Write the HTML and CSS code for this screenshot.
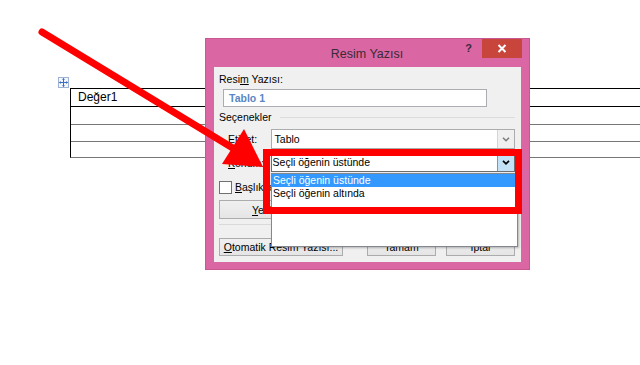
FILE: index.html
```html
<!DOCTYPE html>
<html lang="tr">

<head>
    <meta charset="UTF-8">
    <meta name="viewport" content="width=device-width, initial-scale=1.0">
    <title>Resim Yazısı</title>
    <link rel="stylesheet" href="styles.css">
</head>

<body>
    <div class="doc">
        <div class="table-wrap">
            <span class="move-handle">
                <svg width="9" height="9" viewBox="0 0 9 9">
                    <path d="M4.5 0.5 L4.5 8.5 M0.5 4.5 L8.5 4.5" stroke="#3b6fc4" stroke-width="1" fill="none" />
                    <path d="M4.5 0 L3 1.8 L6 1.8 Z M4.5 9 L3 7.2 L6 7.2 Z M0 4.5 L1.8 3 L1.8 6 Z M9 4.5 L7.2 3 L7.2 6 Z" fill="#3b6fc4" />
                </svg>
            </span>
            <div class="doc-table">
                <div class="doc-row">Değer1</div>
                <div class="doc-row"></div>
                <div class="doc-row light"></div>
                <div class="doc-row light short"></div>
            </div>
        </div>
    </div>

    <div class="dialog">
        <div class="titlebar">
            <span class="title">Resim Yazısı</span>
            <div class="title-buttons">
                <span class="help">?</span>
                <span class="close">
                    <svg width="10" height="9" viewBox="0 0 10 9">
                        <path d="M1.5 1 L8.5 8 M8.5 1 L1.5 8" stroke="#fff" stroke-width="2" />
                    </svg>
                </span>
            </div>
        </div>

        <div class="client">
            <div class="field-label">Resi<u>m</u> Yazısı:</div>
            <div class="textbox">Tablo 1</div>

            <div class="group-title">
                <span>Seçenekler</span>
                <span class="rule"></span>
            </div>

            <div class="row">
                <span class="row-label">Etik<u>e</u>t:</span>
                <div class="combo">
                    <span class="combo-text">Tablo</span>
                    <span class="combo-arrow">
                        <svg width="8" height="5" viewBox="0 0 8 5">
                            <polyline points="1,0.8 4,3.8 7,0.8" fill="none" stroke="#7a7a7a" stroke-width="1.5" />
                        </svg>
                    </span>
                </div>
            </div>

            <div class="row konum">
                <span class="row-label"><u>K</u>onum:</span>
                <div class="combo open">
                    <span class="combo-text">Seçli öğenin üstünde</span>
                    <span class="combo-arrow">
                        <svg width="8" height="5" viewBox="0 0 8 5">
                            <polyline points="1,0.8 4,3.8 7,0.8" fill="none" stroke="#000" stroke-width="1.7" />
                        </svg>
                    </span>
                </div>
            </div>

            <!-- the open list covers everything right of x=270 here, so clip it -->
            <div class="check-row">
                <span class="checkbox"></span>
                <span class="clipped"><u>B</u>aşlıktan</span>
            </div>

            <div class="button-row clip-row">
                <button class="btn btn-wide"><u>Y</u>eni Etiket...</button>
            </div>

            <div class="separator"></div>

            <div class="button-row bottom">
                <button class="btn btn-wide"><u>O</u>tomatik Resim Yazısı...</button>
                <span class="spacer"></span>
                <button class="btn btn-ok">Tamam</button>
                <button class="btn btn-ok">İptal</button>
            </div>

            <div class="dropdown-list">
                <div class="option selected">Seçli öğenin üstünde</div>
                <div class="option">Seçli öğenin altında</div>
            </div>
        </div>
    </div>

    <svg class="annotation" width="640" height="365" viewBox="0 0 640 365">
        <rect x="266.5" y="152.5" width="252" height="58" fill="none" stroke="#fe0000" stroke-width="7" />
        <line x1="42" y1="32" x2="236" y2="150" stroke="#fe0000" stroke-width="7" stroke-linecap="round" />
        <polygon points="263,167 244,129 222,164" fill="#fe0000" />
    </svg>
</body>

</html>
```

FILE: styles.css
```css
body {
    margin: 0;
    width: 640px;
    height: 365px;
    overflow: hidden;
    position: relative;
    background: #fff;
    font-family: "Liberation Sans", Arial, sans-serif;
}

/* document behind the dialog */
.doc {
    padding: 88px 0 0 70px;
}

.table-wrap {
    position: relative;
}

.move-handle {
    position: absolute;
    left: -12px;
    top: -11px;
    width: 9px;
    height: 9px;
    border: 1px solid #9fb2d4;
    background: #f4f7fc;
    display: flex;
}

.doc-table {
    border-left: 1px solid #000;
    border-bottom: 1px solid #777;
    width: 600px;
}

.doc-row {
    border-top: 1px solid #000;
    height: 17px;
    line-height: 17px;
    padding-left: 7px;
    font-size: 12px;
    color: #000;
}

.doc-row.light {
    border-top-color: #777;
    height: 16px;
}

.doc-row.short {
    height: 15px;
}

/* dialog window */
.dialog {
    position: absolute;
    left: 205px;
    top: 38px;
    width: 325px;
    height: 232px;
    box-sizing: border-box;
    padding: 0 8px 7px 8px;
    background: #da67a3;
    border: 1px solid #c95892;
    display: flex;
    flex-direction: column;
}

.titlebar {
    height: 28px;
    display: grid;
    margin: 0 -1px 0 0;
}

.title,
.title-buttons {
    grid-area: 1 / 1;
}

.title {
    justify-self: center;
    align-self: center;
    font-size: 12.5px;
    color: #3a2a35;
    margin-top: 1px;
    margin-left: -2px;
}

.title-buttons {
    justify-self: end;
    display: flex;
    align-items: flex-start;
    gap: 10px;
}

.help {
    font-size: 11px;
    font-weight: bold;
    color: #3a2a3a;
    margin-top: 3px;
}

.close {
    width: 40px;
    height: 19px;
    background: #c8453c;
    display: flex;
    align-items: center;
    justify-content: center;
}

.client {
    position: relative;
    flex: 1;
    background: #f0f0f0;
    padding: 6px 6px 0 5px;
    font-size: 10.5px;
    color: #000;
    display: flex;
    flex-direction: column;
}

.field-label {
    line-height: 13px;
}

.textbox {
    margin: 3px 0 0 4px;
    width: 264px;
    height: 18px;
    box-sizing: border-box;
    border: 1px solid #abadb3;
    background: #fff;
    padding-left: 5px;
    line-height: 16px;
    font-weight: bold;
    color: #5a86c4;
}

.group-title {
    margin-top: 4px;
    display: flex;
    align-items: center;
    gap: 8px;
    line-height: 12px;
}

.rule {
    flex: 1;
    height: 1px;
    background: #dcdcdc;
    margin-top: 1px;
}

.row {
    margin-top: 6px;
    display: flex;
    align-items: center;
}

.row.konum {
    margin-top: 4px;
}

.row-label {
    width: 43px;
    padding-left: 9px;
}

.combo {
    width: 247px;
    height: 20px;
    box-sizing: border-box;
    border: 1px solid #acacac;
    background: #fff;
    display: flex;
    align-items: stretch;
}

.combo.open {
    height: 19px;
    border-color: #6e6e6e;
}

.combo-text {
    flex: 1;
    padding-left: 3px;
    line-height: 18px;
}

.combo.open .combo-text {
    line-height: 17px;
    padding-left: 1px;
}

.combo-arrow {
    width: 16px;
    border-left: 1px solid #d4d4d4;
    background: #f0f0f0;
    display: flex;
    align-items: center;
    justify-content: center;
}

.combo.open .combo-arrow {
    background: #c4e2f7;
    border-left-color: #5aa0dc;
}

.check-row {
    margin-top: 9px;
    display: flex;
    align-items: center;
    gap: 3px;
    line-height: 13px;
}

.checkbox {
    width: 11px;
    height: 11px;
    border: 1px solid #707070;
    background: #fff;
}

.clipped {
    width: 36px;
    overflow: hidden;
    white-space: nowrap;
}

.button-row {
    margin-top: 6px;
    display: flex;
    gap: 8px;
}

.clip-row {
    width: 52px;
    overflow: hidden;
}

.button-row.bottom {
    margin-top: 13px;
    width: auto;
    gap: 10px;
}

.spacer {
    flex: 1;
}

.btn {
    flex-shrink: 0;
    height: 19px;
    padding: 0;
    border: 1px solid #acacac;
    background: linear-gradient(#f0f0f0, #e5e5e5);
    font-family: "Liberation Sans", Arial, sans-serif;
    font-size: 10.5px;
    color: #000;
}

.btn-wide {
    width: 124px;
}

.button-row.bottom .btn {
    height: 18px;
}

.btn-ok {
    width: 69px;
}

.separator {
    margin-top: 5px;
    height: 1px;
    background: #dadada;
}

/* open list of the Konum combo */
.dropdown-list {
    position: absolute;
    left: 57px;
    top: 106px;
    width: 247px;
    height: 74px;
    box-sizing: border-box;
    border: 1px solid #828790;
    background: #fff;
    box-shadow: 1px 1px 2px rgba(0, 0, 0, 0.25);
}

.option {
    height: 13px;
    line-height: 13px;
    padding-left: 1px;
}

.option.selected {
    background: #3399ff;
    color: #fff;
}

/* red markup drawn over the screenshot */
.annotation {
    position: absolute;
    left: 0;
    top: 0;
    pointer-events: none;
}
```
